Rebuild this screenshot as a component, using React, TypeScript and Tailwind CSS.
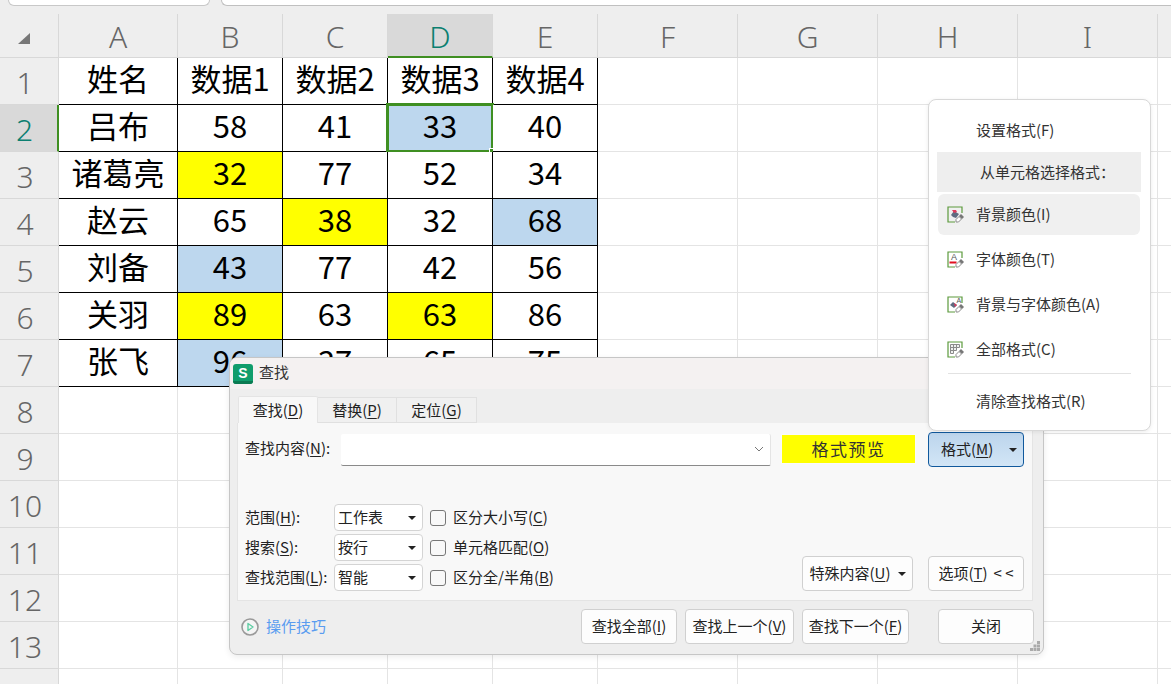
import React from "react";

const cols = ["A", "B", "C", "D", "E", "F", "G", "H", "I"];
type Fill = "" | "y" | "b";
const data: [string, Fill][][] = [
  [["姓名", ""], ["数据1", ""], ["数据2", ""], ["数据3", ""], ["数据4", ""]],
  [["吕布", ""], ["58", ""], ["41", ""], ["33", "b"], ["40", ""]],
  [["诸葛亮", ""], ["32", "y"], ["77", ""], ["52", ""], ["34", ""]],
  [["赵云", ""], ["65", ""], ["38", "y"], ["32", ""], ["68", "b"]],
  [["刘备", ""], ["43", "b"], ["77", ""], ["42", ""], ["56", ""]],
  [["关羽", ""], ["89", "y"], ["63", ""], ["63", "y"], ["86", ""]],
  [["张飞", ""], ["96", "b"], ["37", ""], ["65", ""], ["75", ""]],
];

function Key({ label, k, tail = ")" }: { label: string; k: string; tail?: string }) {
  return (
    <span className="whitespace-nowrap">
      {label}(<span className="underline underline-offset-2">{k}</span>{tail}
    </span>
  );
}

function Caret() {
  return <span className="inline-block w-0 h-0 border-x-[4px] border-x-transparent border-t-[4px] border-t-[#222]" />;
}

function Btn({ className, children }: { className: string; children: React.ReactNode }) {
  return (
    <div className={`h-[35px] flex items-center justify-center rounded-[4px] border border-[#d0d0d0] bg-[#fdfdfd] text-[15px] text-[#222] ${className}`}>
      {children}
    </div>
  );
}

function OptRow({ label, value, check }: { label: React.ReactNode; value: string; check: React.ReactNode }) {
  return (
    <div className="flex items-center h-[27px]">
      <div className="w-[89px] text-[15px] text-[#222]">{label}</div>
      <div className="w-[89px] h-[27px] flex items-center justify-between pl-[3px] pr-[6px] bg-white border border-[#d4d4d4] rounded-[4px] text-[15px] text-[#222]">
        <span>{value}</span>
        <Caret />
      </div>
      <div className="ml-[7px] w-[16px] h-[16px] rounded-[3px] border border-[#777] bg-[#f8f8f8]" />
      <div className="ml-[7px] text-[15px] text-[#222]">{check}</div>
    </div>
  );
}

function MenuIcon({ kind }: { kind: "bg" | "font" | "both" | "all" }) {
  return (
    <svg width="18" height="18" viewBox="0 0 18 18" className="shrink-0">
      <path d="M15 7V1H1v15h7" fill="none" stroke="#5c9a3c" strokeWidth="1.2" />
      {kind === "bg" && (
        <>
          <path d="M4 9l3-4 5 3-3 4-3-1z" fill="#5f6b80" />
          <path d="M5 4h4l1 2-3 1z" fill="#e03a5a" />
        </>
      )}
      {kind === "font" && (
        <>
          <text x="4" y="9" fontSize="9" fill="#555" fontFamily="Liberation Sans">A</text>
          <rect x="2.500" y="10.500" width="7" height="2" fill="#e01020" />
        </>
      )}
      {kind === "both" && (
        <>
          <text x="9.500" y="6.500" fontSize="7" fill="#555" fontFamily="Liberation Sans">A</text>
          <path d="M3 9l3-3 4 3-3 3z" fill="#5f6b80" />
          <path d="M7 7l3 2-2 2z" fill="#e03a5a" />
        </>
      )}
      {kind === "all" && (
        <path d="M3.500 3.500h9v3h-3v3h-3v3h-3zM3.500 6.500h6M3.500 9.500h3M6.500 3.500v6M9.500 3.500v3" fill="#eef0ee" stroke="#8a8a8a" strokeWidth="1" />
      )}
      <path d="M9 16v-2.500l3-3 2.500 2.500-3 3z" fill="#fff" stroke="#8a8a8a" strokeWidth="1" />
      <path d="M12 10l2-2 3 3-2 2z" fill="#777" />
    </svg>
  );
}

function MenuItem({ kind, text, hover }: { kind?: "bg" | "font" | "both" | "all"; text: string; hover?: boolean }) {
  return (
    <div className={`h-[41px] flex items-center rounded-[6px] ml-[9px] mr-[10px] px-[9px] ${hover ? "bg-[#f0f0f0]" : ""}`}>
      <div className="w-[29px]">{kind ? <MenuIcon kind={kind} /> : null}</div>
      <span className="text-[15px] text-[#333]">{text}</span>
    </div>
  );
}

export default function App() {
  return (
    <div className="relative w-[1171px] h-[684px] overflow-hidden bg-white font-['Noto_Sans_CJK_SC','Noto_Sans',sans-serif]">
      {/* top strip */}
      <div className="h-[14px] bg-[#eeeeee] flex gap-[11px] pl-[8px]">
        <div className="w-[202px] h-[6px] bg-white border border-t-0 border-[#c8c8c8] rounded-b-[6px]" />
        <div className="flex-1 h-[6px] bg-white border border-t-0 border-r-0 border-[#c0c0c0] rounded-bl-[6px]" />
      </div>

      {/* sheet */}
      <div className="grid grid-cols-[59px_119px_105px_105px_105px_105px_140px_140px_140px_140px_13px] grid-rows-[44px_repeat(14,47px)]">
        <div className="bg-[#eeeeee] border-r border-b border-[#d8d8d8] flex items-center justify-center">
          <svg width="14" height="14" viewBox="0 0 14 14" className="mr-[10px] mt-[4px]">
            <path d="M13 2v11H1z" fill="#777" />
          </svg>
        </div>
        {cols.map((c) => (
          <div
            key={c}
            className={`flex items-center justify-center pt-[2px] text-[30px] font-light border-r ${
              c === "D"
                ? "bg-[#d9d9d9] text-[#0b7f70] border-b-2 border-b-[#3f8f22] border-r-[#d8d8d8]"
                : "bg-[#eeeeee] text-[#666] border-b border-[#d8d8d8]"
            } font-['Noto_Sans',sans-serif]`}
          >
            {c}
          </div>
        ))}
        <div className="bg-[#eeeeee] border-b border-[#d8d8d8]" />
        {Array.from({ length: 14 }).map((_, r) => (
          <React.Fragment key={r}>
            <div
              className={`flex items-center justify-center pr-[8px] pt-[3px] text-[30px] font-light font-['Noto_Sans',sans-serif] ${
                r === 1
                  ? "bg-[#d9d9d9] text-[#0b7f70] border-r-2 border-r-[#3f8f22] border-b border-b-[#d8d8d8]"
                  : "bg-[#eeeeee] text-[#666] border-r border-b border-[#d8d8d8]"
              }`}
            >
              {r + 1}
            </div>
            {cols.map((_c, c) => {
              const cell = data[r]?.[c];
              if (!cell) return <div key={c} className="border-r border-b border-[#e4e4e4]" />;
              const [t, f] = cell;
              const sel = r === 1 && c === 3;
              return (
                <div
                  key={c}
                  className={`relative flex items-center justify-center pb-[5px] text-[31px] text-black border-r border-b border-black ${
                    f === "y" ? "bg-[#ffff00]" : f === "b" ? "bg-[#bdd7ee]" : "bg-white"
                  }`}
                >
                  {t}
                  {sel && (
                    <>
                      <div className="absolute -left-[2px] -top-[2px] -right-[2px] -bottom-[2px] border-[3px] border-[#3f8f22]" />
                      <div className="absolute -right-[3px] -bottom-[3px] w-[6px] h-[6px] bg-[#3f8f22] border border-white" />
                    </>
                  )}
                </div>
              );
            })}
            <div className="border-b border-[#e4e4e4]" />
          </React.Fragment>
        ))}
      </div>

      {/* find dialog */}
      <div className="absolute left-[229px] top-[357px] w-[815px] h-[298px] flex flex-col rounded-[8px] border border-[#c6c6c6] bg-[#eeeeee] overflow-hidden shadow-[0_2px_6px_rgba(0,0,0,0.08)]">
        <div className="h-[31px] bg-[#f4f1f1] flex items-center pl-[3px] shrink-0">
          <div className="relative w-[20px] h-[20px] rounded-[3px] bg-[#0f9d6c] overflow-hidden flex items-center justify-center text-white text-[14px] font-bold font-['Liberation_Sans',sans-serif]">
            S
            <div className="absolute left-0 right-0 bottom-0 h-[3px] bg-[#0b7a52]" />
          </div>
          <span className="ml-[6px] pb-[3px] text-[15px] text-[#333]">查找</span>
        </div>
        <div className="flex-1 flex flex-col px-[7px] pt-[7px]">
          <div className="flex h-[27px] pl-[1px] text-[15px] text-[#222]">
            <div className="w-[80px] flex items-center justify-center bg-[#f8f8f8] border border-b-0 border-[#e4e4e4] rounded-t-[2px]">
              <Key label="查找" k="D" />
            </div>
            <div className="w-[79px] mt-[1px] flex items-center justify-center bg-[#f0f0f0] border border-l-0 border-[#e0e0e0]">
              <Key label="替换" k="P" />
            </div>
            <div className="w-[80px] mt-[1px] flex items-center justify-center bg-[#f0f0f0] border border-l-0 border-[#e0e0e0]">
              <Key label="定位" k="G" />
            </div>
          </div>
          <div className="h-[178px] w-[796px] bg-[#f8f8f8] border border-t-0 border-[#e4e4e4] flex flex-col px-[7px]">
            <div className="flex items-center mt-[9px] h-[35px]">
              <div className="w-[96px] text-[15px] text-[#222] pb-[2px]">
                <Key label="查找内容" k="N" tail="):" />
              </div>
              <div className="w-[430px] h-[32px] flex items-center justify-end pr-[5px] bg-white border-b border-b-[#8a8a8a] border-r border-r-[#e4e4e4] rounded-[2px]">
                <svg width="12" height="8" viewBox="0 0 12 8">
                  <path d="M2 2l4 4 4-4" fill="none" stroke="#777" strokeWidth="1" />
                </svg>
              </div>
              <div className="ml-[10px] w-[135px] h-[30px] mb-[2px] flex items-center justify-center bg-[#ffff00] border border-[#fafafa] text-[17px] tracking-[1.5px] text-[#333]">
                格式预览
              </div>
              <div className="ml-[12px] w-[96px] h-[35px] flex items-center justify-between pl-[12px] pr-[6px] rounded-[4px] border border-[#11599c] bg-gradient-to-b from-[#bcd5ec] to-[#d2e5f6] text-[15px] text-[#222]">
                <Key label="格式" k="M" />
                <Caret />
              </div>
            </div>
            <div className="flex items-end justify-between mt-[37px]">
              <div className="flex flex-col gap-[3px]">
                <OptRow label={<Key label="范围" k="H" tail="):" />} value="工作表" check={<Key label="区分大小写" k="C" />} />
                <OptRow label={<Key label="搜索" k="S" tail="):" />} value="按行" check={<Key label="单元格匹配" k="O" />} />
                <OptRow label={<Key label="查找范围" k="L" tail="):" />} value="智能" check={<Key label="区分全/半角" k="B" />} />
              </div>
              <div className="flex gap-[15px] pr-[1px]">
                <Btn className="w-[111px] gap-[7px]">
                  <Key label="特殊内容" k="U" />
                  <Caret />
                </Btn>
                <Btn className="w-[96px]">
                  <Key label="选项" k="T" />
                  <span className="ml-[6px]">&lt; &lt;</span>
                </Btn>
              </div>
            </div>
          </div>
          <div className="flex items-center mt-[8px] pr-[2px]">
            <svg width="20" height="20" viewBox="0 0 20 20" className="ml-[3px]">
              <circle cx="10" cy="10" r="8" fill="#f4f4f4" stroke="#999" strokeWidth="1.6" />
              <path d="M8 6.500v7l5-3.500z" fill="none" stroke="#5fcda4" strokeWidth="1.400" strokeLinejoin="round" />
            </svg>
            <span className="ml-[6px] text-[15px] text-[#5a9cf0]">操作技巧</span>
            <div className="flex-1" />
            <Btn className="w-[96px]">
              <Key label="查找全部" k="I" />
            </Btn>
            <Btn className="ml-[8px] w-[109px]">
              <Key label="查找上一个" k="V" />
            </Btn>
            <Btn className="ml-[8px] w-[107px]">
              <Key label="查找下一个" k="F" />
            </Btn>
            <Btn className="ml-[29px] w-[96px]">关闭</Btn>
          </div>
        </div>
        <svg width="11" height="11" viewBox="0 0 11 11" className="absolute right-[2px] bottom-[2px]">
          <path d="M7 0h3v3H7zM3.500 3.500h3v3h-3zM7 3.500h3v3H7zM0 7h3v3H0zM3.500 7h3v3h-3zM7 7h3v3H7z" fill="#aaa" />
        </svg>
      </div>

      {/* format menu */}
      <div className="absolute left-[928px] top-[99px] w-[223px] h-[332px] rounded-[8px] border border-[#d8d8d8] bg-white shadow-[0_1px_4px_rgba(0,0,0,0.08)] flex flex-col pt-[10px]">
        <MenuItem text="设置格式(F)" />
        <div className="h-[40px] mt-[1px] ml-[8px] mr-[9px] bg-[#eeeeee] flex items-center pl-[43px] text-[15px] text-[#333]">从单元格选择格式：</div>
        <div className="mt-[2px] flex flex-col gap-[4px]">
          <MenuItem kind="bg" text="背景颜色(I)" hover />
          <MenuItem kind="font" text="字体颜色(T)" />
          <MenuItem kind="both" text="背景与字体颜色(A)" />
          <MenuItem kind="all" text="全部格式(C)" />
        </div>
        <div className="mt-[3px] mx-[19px] h-px bg-[#e2e2e2]" />
        <div className="mt-[7px]">
          <MenuItem text="清除查找格式(R)" />
        </div>
      </div>
    </div>
  );
}
